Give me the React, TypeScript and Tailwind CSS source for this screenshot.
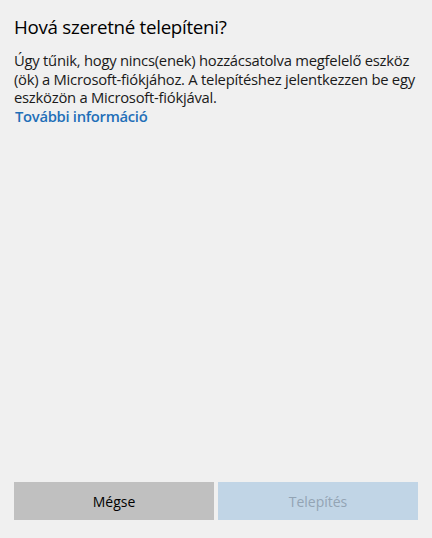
export default function App() {
  return (
    <div
      className="flex h-[538px] w-[432px] flex-col bg-[#f0f0f0] px-[14px] text-black"
      style={{ fontFamily: '"Open Sans", "Noto Sans", sans-serif' }}
    >
      <h1 className="mt-[13px] text-[18.75px] leading-[28px] tracking-[-0.3px]">Hová szeretné telepíteni?</h1>
      <p className="mt-[10px] whitespace-nowrap text-[14.8px] leading-[18.5px] tracking-[-0.25px] text-[#1a1a1a]">
        Úgy tűnik, hogy nincs(enek) hozzácsatolva megfelelő eszköz
        <br />
        (ök) a Microsoft-fiókjához. A telepítéshez jelentkezzen be egy
        <br />
        eszközön a Microsoft-fiókjával.
      </p>
      <a className="ml-px text-[14.8px] font-semibold leading-[18.5px] tracking-[-0.3px] text-[#1f6fb8]" href="#">
        További információ
      </a>
      <div className="mt-auto mb-[18px] grid w-[404px] grid-cols-2 gap-[4px]">
        <button className="h-[38px] bg-[#c0c0c0] text-[14px] font-medium text-black">Mégse</button>
        <button className="h-[38px] bg-[#c1d5e6] text-[14px] text-[#93a4b4]" disabled>
          Telepítés
        </button>
      </div>
    </div>
  )
}
